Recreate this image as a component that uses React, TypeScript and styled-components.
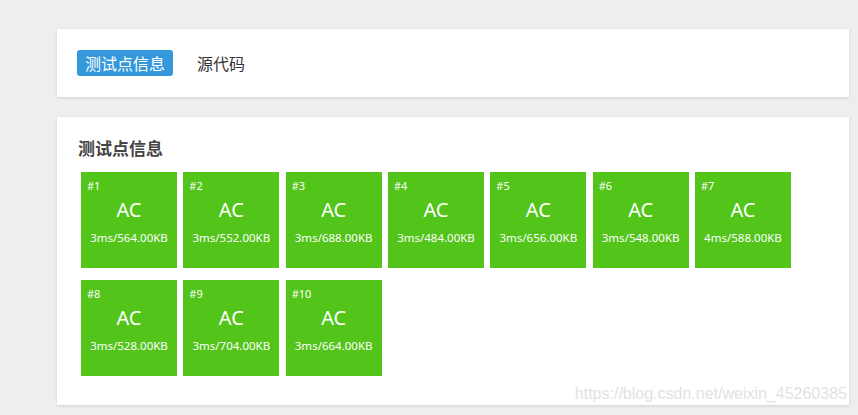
import styled, { createGlobalStyle } from 'styled-components'

const GlobalStyle = createGlobalStyle`
  body {
    margin: 0;
    background: #eeeeee;
    font-family: "Noto Sans", "Noto Sans CJK SC", sans-serif;
  }
`

const Page = styled.div`
  position: relative;
  width: 858px;
  height: 415px;
  padding: 29px 0 0 57px;
  box-sizing: border-box;
  display: flex;
  flex-direction: column;
  gap: 20px;
`

const Card = styled.div<{ $h: number }>`
  width: 792px;
  height: ${(p) => p.$h}px;
  box-sizing: border-box;
  background: #fff;
  box-shadow: 0 1px 3px rgba(0, 0, 0, 0.12);
`

const TabBar = styled.div`
  display: flex;
  align-items: center;
  gap: 24px;
  padding: 21px 20px 0;
`

const Tab = styled.div<{ $active?: boolean }>`
  height: 26px;
  padding: 0 ${(p) => (p.$active ? '8px' : '0')};
  border-radius: 3px;
  display: flex;
  align-items: center;
  font-size: 16px;
  color: ${(p) => (p.$active ? '#fff' : '#333')};
  background: ${(p) => (p.$active ? '#3498db' : 'transparent')};
`

const Section = styled.div`
  padding: 20px 21px 0;
`

const Heading = styled.div`
  font-size: 17px;
  font-weight: bold;
  color: #444;
  line-height: 24px;
  margin-bottom: 11px;
`

const Grid = styled.div`
  display: flex;
  flex-wrap: wrap;
  gap: 12px 6.33px;
  padding-left: 3px;
  width: 730px;
`

const Tile = styled.div`
  position: relative;
  width: 96px;
  height: 96px;
  background: #52c41a;
  color: #fff;
  display: flex;
  flex-direction: column;
  align-items: center;
`

const Num = styled.div`
  align-self: flex-start;
  font-size: 11px;
  line-height: 14px;
  margin: 7px 0 0 6px;
`

const Verdict = styled.div`
  font-size: 20px;
  line-height: 28px;
  margin-top: 3px;
`

const Usage = styled.div`
  font-size: 11.5px;
  line-height: 14px;
  margin-top: 7px;
`

const Watermark = styled.div`
  position: absolute;
  right: 11px;
  bottom: 12px;
  font-family: "Liberation Sans", Arial, sans-serif;
  font-size: 16px;
  color: #e2e2e2;
`

const cases = [
  ['3ms', '564.00KB'],
  ['3ms', '552.00KB'],
  ['3ms', '688.00KB'],
  ['3ms', '484.00KB'],
  ['3ms', '656.00KB'],
  ['3ms', '548.00KB'],
  ['4ms', '588.00KB'],
  ['3ms', '528.00KB'],
  ['3ms', '704.00KB'],
  ['3ms', '664.00KB'],
]

export default function App() {
  return (
    <Page>
      <GlobalStyle />
      <Card $h={68}>
        <TabBar>
          <Tab $active>测试点信息</Tab>
          <Tab>源代码</Tab>
        </TabBar>
      </Card>
      <Card $h={288}>
        <Section>
          <Heading>测试点信息</Heading>
          <Grid>
            {cases.map(([t, m], i) => (
              <Tile key={i}>
                <Num>#{i + 1}</Num>
                <Verdict>AC</Verdict>
                <Usage>
                  {t}/{m}
                </Usage>
              </Tile>
            ))}
          </Grid>
        </Section>
      </Card>
      <Watermark>https://blog.csdn.net/weixin_45260385</Watermark>
    </Page>
  )
}
